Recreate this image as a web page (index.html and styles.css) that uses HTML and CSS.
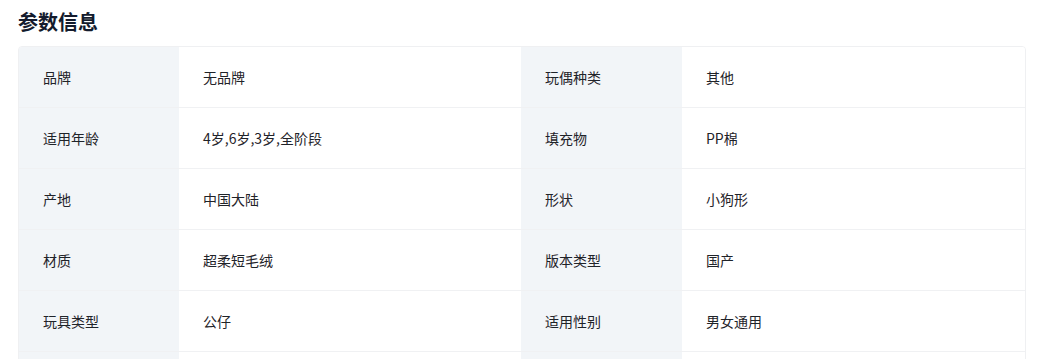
FILE: index.html
```html
<!DOCTYPE html>
<html lang="zh-CN">
<head>
<meta charset="utf-8">
<title>参数信息</title>
<link rel="stylesheet" href="styles.css">
</head>
<body>
<section class="params">
  <h2 class="params-title">参数信息</h2>
  <div class="params-table">
    <div class="cell label">品牌</div><div class="cell value">无品牌</div>
    <div class="cell label">玩偶种类</div><div class="cell value">其他</div>
    <div class="cell label">适用年龄</div><div class="cell value">4岁,6岁,3岁,全阶段</div>
    <div class="cell label">填充物</div><div class="cell value">PP棉</div>
    <div class="cell label">产地</div><div class="cell value">中国大陆</div>
    <div class="cell label">形状</div><div class="cell value">小狗形</div>
    <div class="cell label">材质</div><div class="cell value">超柔短毛绒</div>
    <div class="cell label">版本类型</div><div class="cell value">国产</div>
    <div class="cell label">玩具类型</div><div class="cell value">公仔</div>
    <div class="cell label">适用性别</div><div class="cell value">男女通用</div>
    <div class="cell label"></div><div class="cell value"></div>
    <div class="cell label"></div><div class="cell value"></div>
  </div>
</section>
</body>
</html>
```
FILE: styles.css
```css
* { box-sizing: border-box; }
html, body { margin: 0; padding: 0; background: #ffffff; }
body {
  font-family: "Noto Sans CJK SC", "Noto Sans", sans-serif;
  color: #1f2329;
}
.params {
  padding: 8px 0 0 18px;
  width: 1026px;
}
.params-title {
  margin: 0 0 10px 0;
  font-size: 20px;
  line-height: 28px;
  font-weight: 700;
  color: #141b2d;
}
.params-table {
  display: grid;
  grid-template-columns: 160px 342px 161px 1fr;
  border: 1px solid #eff0f2;
  border-radius: 4px;
  overflow: hidden;
}
.cell {
  height: 61px;
  display: flex;
  align-items: center;
  font-size: 14px;
  line-height: 20px;
  border-bottom: 1px solid #f0f1f3;
}
.label {
  background: #f2f5f8;
  padding-left: 24px;
}
.value {
  background: #ffffff;
  padding-left: 24px;
}
```
